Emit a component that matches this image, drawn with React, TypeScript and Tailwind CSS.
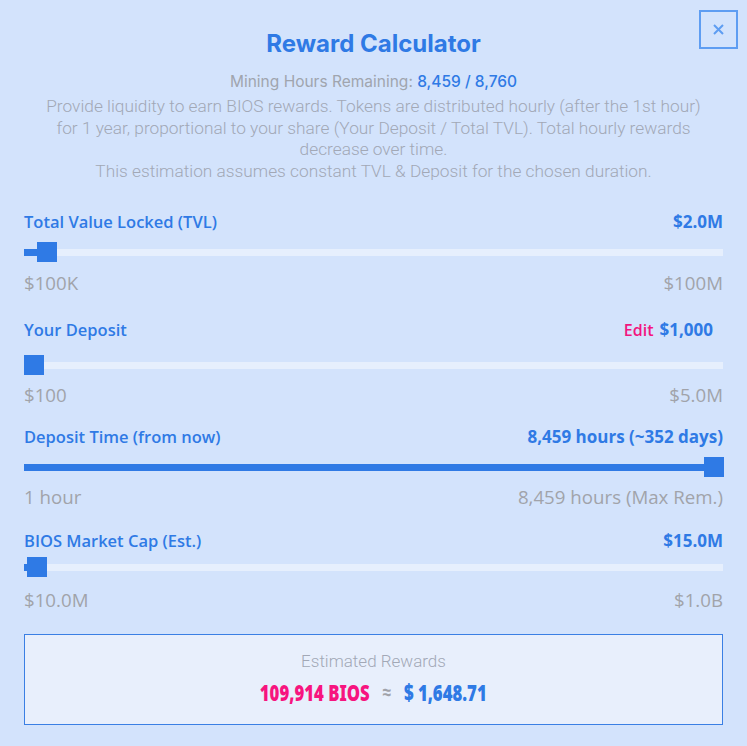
import React from "react";

type SliderProps = { thumbLeft: number; fill: number };

function Slider({ thumbLeft, fill }: SliderProps) {
  return (
    <div className="relative h-[20px] w-full">
      <div className="absolute left-0 right-0 top-[7px] h-[7px] bg-[#e6effd]" />
      <div className="absolute left-0 top-[7px] h-[7px] bg-[#2f7ae5]" style={{ width: `${fill}px` }} />
      <div className="absolute top-0 h-[20px] w-[20px] bg-[#2f7ae5]" style={{ left: `${thumbLeft}px` }} />
    </div>
  );
}

const labelFont = { fontFamily: '"Open Sans", "Noto Sans", sans-serif' };

export default function App() {
  return (
    <div className="relative min-h-[746px] w-[747px] bg-[#d3e3fc] px-6" style={labelFont}>
      <button className="absolute right-[9px] top-[10px] flex h-[39px] w-[39px] items-center justify-center border-2 border-[#5e9df2]">
        <svg width="11" height="11" viewBox="0 0 11 11">
          <path d="M1 1L10 10M10 1L1 10" stroke="#5e9df2" strokeWidth="2" />
        </svg>
      </button>

      <div className="pt-[29px] text-center">
        <h1
          className="text-[24px] font-bold leading-[30px] text-[#2f7ae5]"
          style={{ fontFamily: 'Inter, "Noto Sans", sans-serif' }}
        >
          Reward Calculator
        </h1>
        <p
          className="mt-[13px] text-[15.5px] font-normal leading-[20px] text-[#a0a5ae]"
          style={{ fontFamily: 'Inter, "Noto Sans", sans-serif' }}
        >
          Mining Hours Remaining: <span className="font-medium text-[#2f7ae5]">8,459 / 8,760</span>
        </p>
        <p
          className="mt-[4px] text-[17.3px] font-light leading-[21.5px] text-[#a2a8b6]"
          style={{ fontFamily: 'Roboto, "Noto Sans", sans-serif' }}
        >
          Provide liquidity to earn BIOS rewards. Tokens are distributed hourly (after the 1st hour)
          <br />
          for 1 year, proportional to your share (Your Deposit / Total TVL). Total hourly rewards
          <br />
          decrease over time.
          <br />
          This estimation assumes constant TVL &amp; Deposit for the chosen duration.
        </p>
      </div>

      {/* TVL */}
      <div className="mt-[29px] flex h-[22px] items-center justify-between text-[#2f7ae5]">
        <span className="text-[16.5px] font-semibold">Total Value Locked (TVL)</span>
        <span className="text-[17px] font-bold">$2.0M</span>
      </div>
      <div className="mt-[9px]">
        <Slider thumbLeft={13} fill={20} />
      </div>
      <div className="mt-[9px] flex h-[24px] items-center justify-between text-[18.7px] text-[#a1a3aa]">
        <span>$100K</span>
        <span>$100M</span>
      </div>

      {/* Deposit */}
      <div className="mt-[24px] flex h-[22px] items-center justify-between text-[#2f7ae5]">
        <span className="text-[16.5px] font-semibold">Your Deposit</span>
        <span className="flex items-center gap-[6px] pr-[10px]">
          <span className="text-[16px] font-semibold text-[#f2157f]">Edit</span>
          <span className="text-[17px] font-bold">$1,000</span>
        </span>
      </div>
      <div className="mt-[14px]">
        <Slider thumbLeft={0} fill={10} />
      </div>
      <div className="mt-[8px] flex h-[24px] items-center justify-between text-[18.7px] text-[#a1a3aa]">
        <span>$100</span>
        <span>$5.0M</span>
      </div>

      {/* Deposit Time */}
      <div className="mt-[19px] flex h-[22px] items-center justify-between text-[#2f7ae5]">
        <span className="text-[16.5px] font-semibold">Deposit Time (from now)</span>
        <span className="text-[17px] font-bold">8,459 hours (~352 days)</span>
      </div>
      <div className="mt-[9px]">
        <Slider thumbLeft={680} fill={690} />
      </div>
      <div className="mt-[8px] flex h-[24px] items-center justify-between text-[18.7px] text-[#a1a3aa]">
        <span>1 hour</span>
        <span>8,459 hours (Max Rem.)</span>
      </div>

      {/* Market cap */}
      <div className="mt-[21px] flex h-[22px] items-center justify-between text-[#2f7ae5]">
        <span className="text-[16.5px] font-semibold">BIOS Market Cap (Est.)</span>
        <span className="text-[17px] font-bold">$15.0M</span>
      </div>
      <div className="mt-[5px]">
        <Slider thumbLeft={3} fill={10} />
      </div>
      <div className="mt-[11px] flex h-[24px] items-center justify-between text-[18.7px] text-[#a1a3aa]">
        <span>$10.0M</span>
        <span>$1.0B</span>
      </div>

      {/* Estimated rewards */}
      <div className="mt-[22px] flex h-[91px] flex-col items-center border border-[#3a7fe4] bg-[#e8effc] pt-[16px]">
        <div
          className="text-[17px] font-light leading-[20px] text-[#a2a8b6]"
          style={{ fontFamily: 'Roboto, "Noto Sans", sans-serif' }}
        >
          Estimated Rewards
        </div>
        <div
          className="mt-[8px] flex scale-x-[0.76] items-center gap-[17px] text-[22px] font-black leading-[26px]"
          style={{ fontFamily: '"Noto Sans", sans-serif' }}
        >
          <span className="text-[#f7147f]">109,914 BIOS</span>
          <span className="text-[20px] text-[#a1a3aa]">≈</span>
          <span className="text-[#2f7ae5]">$ 1,648.71</span>
        </div>
      </div>
    </div>
  );
}
